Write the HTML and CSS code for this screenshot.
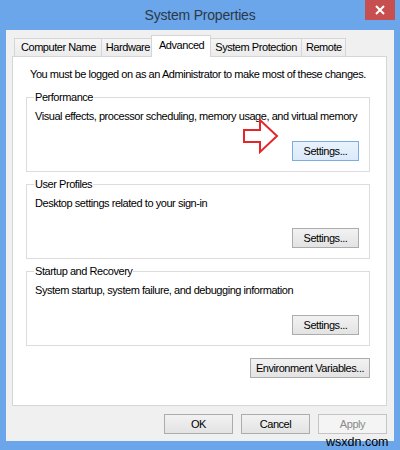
FILE: index.html
```html
<!DOCTYPE html>
<html>
<head>
<meta charset="utf-8">
<title>System Properties</title>
<link rel="stylesheet" href="styles.css">
</head>
<body>
<div class="window">
  <div class="titlebar">
    <span class="spacer"></span>
    <div class="title">System Properties</div>
    <div class="close">
      <svg width="30" height="20" viewBox="0 0 30 20"><path d="M11 6 L19 14 M19 6 L11 14" stroke="#fff" stroke-width="2" fill="none"/></svg>
    </div>
  </div>
  <div class="client">
    <div class="tabs">
      <div class="tab">Computer Name</div>
      <div class="tab">Hardware</div>
      <div class="tab selected">Advanced</div>
      <div class="tab">System Protection</div>
      <div class="tab">Remote</div>
    </div>
    <div class="panel">
      <p class="intro">You must be logged on as an Administrator to make most of these changes.</p>
      <div class="group">
        <div class="legend">Performance</div>
        <p class="desc">Visual effects, processor scheduling, memory usage, and virtual memory</p>
        <button class="btn settings default">Settings...</button>
      </div>
      <div class="group">
        <div class="legend">User Profiles</div>
        <p class="desc">Desktop settings related to your sign-in</p>
        <button class="btn settings">Settings...</button>
      </div>
      <div class="group">
        <div class="legend">Startup and Recovery</div>
        <p class="desc">System startup, system failure, and debugging information</p>
        <button class="btn settings">Settings...</button>
      </div>
      <div class="env-row">
        <button class="btn env">Environment Variables...</button>
      </div>
    </div>
    <div class="actions">
      <button class="btn action">OK</button>
      <button class="btn action">Cancel</button>
      <button class="btn action" disabled>Apply</button>
    </div>
  </div>
  <svg class="arrow" width="42" height="42" viewBox="240 116 42 42">
    <polygon points="244,130 260,130 260,120 277,136 260,152 260,142 244,142" fill="#fff" stroke="#e3262b" stroke-width="2" stroke-linejoin="miter"/>
  </svg>
  <div class="watermark">wsxdn.com</div>
</div>
</body>
</html>
```
FILE: styles.css
```css
* { box-sizing: border-box; }
html, body { margin: 0; padding: 0; }
body {
  background: #6ba6ea;
  font-family: "Liberation Sans", Arial, sans-serif;
  font-size: 11px;
  letter-spacing: -0.45px;
  color: #000;
}
.window {
  position: relative;
  width: 400px;
  height: 450px;
  background: #6ba6ea;
  overflow: hidden;
}
.titlebar {
  height: 30px;
  display: grid;
  grid-template-columns: 1fr auto 1fr;
  align-items: start;
}
.title {
  font-size: 14px;
  letter-spacing: -0.2px;
  line-height: 30px;
  color: #2b3847;
}
.close {
  justify-self: end;
  margin-right: 5px;
  width: 30px;
  height: 20px;
  background: #c74f4f;
}
.close svg { display: block; }
.client {
  margin: 0 6px;
  height: 411px;
  background: #f0f0f0;
  padding: 5px 7px 0 6px;
}
.tabs {
  display: flex;
  align-items: flex-end;
  height: 21px;
  padding-left: 2px;
}
.tab {
  height: 18px;
  line-height: 16px;
  padding: 0 4px;
  border: 1px solid #d5d5d5;
  border-bottom: none;
  margin-right: -1px;
  background: linear-gradient(#f5f5f5, #ececec);
  white-space: nowrap;
}
.tab:first-child { padding: 0 5px 0 6px; }
.tab:nth-child(2) { padding: 0 3px 0 4px; }
.tab:last-child { padding: 0 3px 0 4px; }
.tab.selected {
  position: relative;
  z-index: 1;
  height: 22px;
  margin: 0 -1px -1px -2px;
  padding: 0 6px 0 7px;
  line-height: 18px;
  background: #fff;
}
.panel {
  height: 350px;
  background: #fff;
  border: 1px solid #d5d5d5;
  padding: 10px 16px 0 13px;
  display: flex;
  flex-direction: column;
}
.intro {
  margin: 0 0 0 4px;
  line-height: 15px;
  white-space: nowrap;
}
.group {
  margin-top: 15px;
  border: 1px solid #dcdcdc;
  padding: 0 10px 10px 8px;
  display: flex;
  flex-direction: column;
}
.group + .group { margin-top: 12px; }
.legend {
  align-self: flex-start;
  margin: -8px 0 0 -1px;
  padding: 0 1px;
  background: #fff;
  line-height: 15px;
}
.desc {
  margin: 4px 0 0 0;
  line-height: 15px;
  white-space: nowrap;
}
.btn {
  font-family: "Liberation Sans", Arial, sans-serif;
  font-size: 11px;
  letter-spacing: -0.45px;
  color: #000;
  height: 20px;
  padding: 0;
  border: 1px solid #acacac;
  background: linear-gradient(#f2f2f2, #e3e3e3);
  border-radius: 0;
  white-space: nowrap;
}
.settings {
  align-self: flex-end;
  width: 67px;
  margin-top: 17px;
}
.btn.default {
  border-color: #7aaee3;
  background: linear-gradient(#eaf3fc, #dbeafa);
}
.env-row {
  display: flex;
  justify-content: flex-end;
  margin-top: 12px;
}
.env { width: 120px; }
.actions {
  display: flex;
  justify-content: flex-end;
  gap: 8px;
  margin-top: 8px;
}
.action { width: 69px; }
.btn:disabled {
  color: #8a8a8a;
  border-color: #c4c4c4;
  background: #f4f4f4;
}
.arrow {
  position: absolute;
  left: 240px;
  top: 116px;
}
.watermark {
  position: absolute;
  left: 325px;
  top: 436px;
  font-size: 12.5px;
  letter-spacing: 0;
  line-height: 13px;
  color: #000;
  padding: 0 1px;
}
```
